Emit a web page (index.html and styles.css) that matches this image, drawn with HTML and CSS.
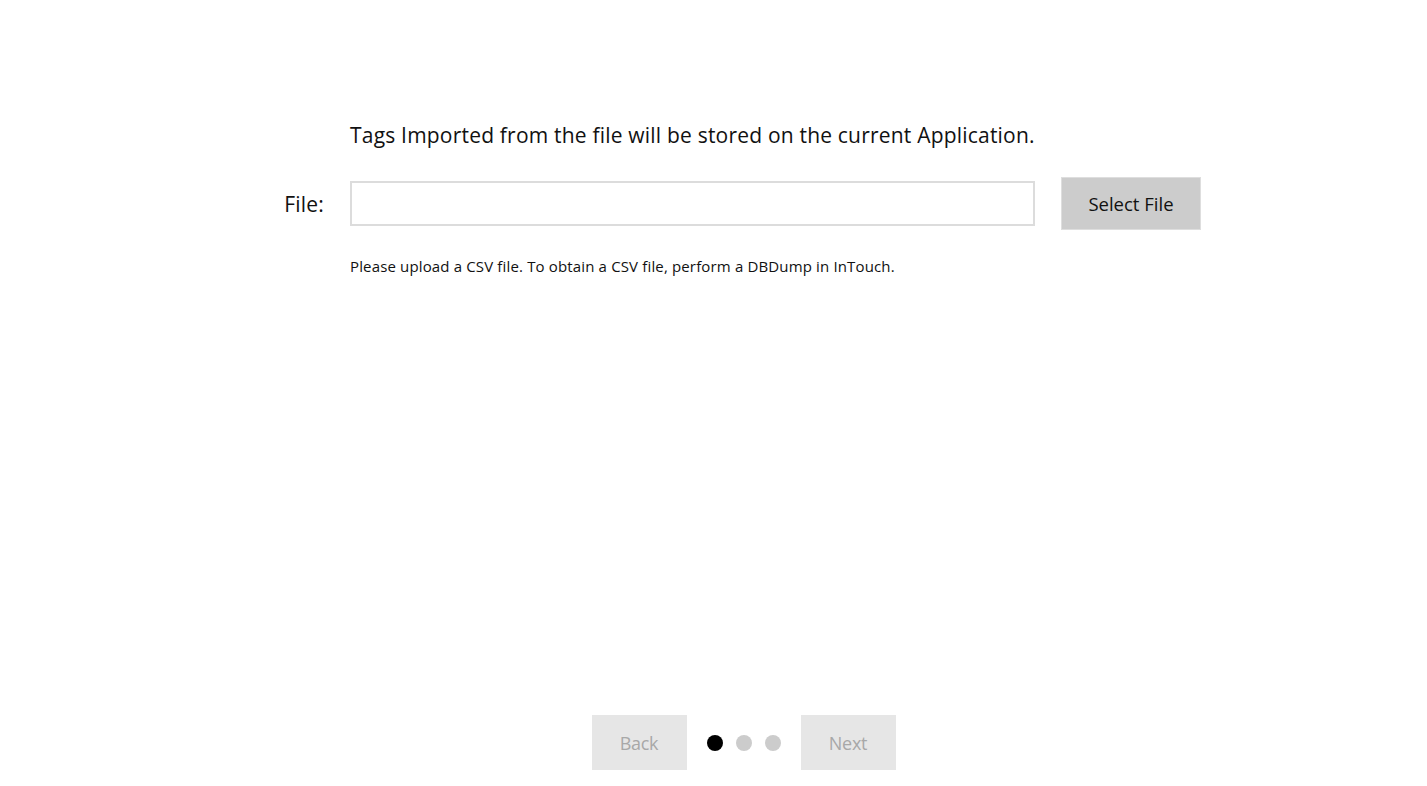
FILE: index.html
```html
<!DOCTYPE html>
<html>
<head>
<meta charset="utf-8">
<link rel="stylesheet" href="styles.css">
</head>
<body>
<div class="page">
  <main class="content">
    <div class="grid">
      <div></div>
      <p class="intro">Tags Imported from the file will be stored on the current Application.</p>
      <div></div>
      <label class="label">File:</label>
      <div class="input"></div>
      <button class="select">Select File</button>
      <div></div>
      <p class="note">Please upload a CSV file. To obtain a CSV file, perform a DBDump in InTouch.</p>
      <div></div>
    </div>
  </main>
  <footer class="nav">
    <button class="navbtn">Back</button>
    <div class="dots">
      <span class="dot active"></span>
      <span class="dot"></span>
      <span class="dot"></span>
    </div>
    <button class="navbtn">Next</button>
  </footer>
</div>
</body>
</html>
```
FILE: styles.css
```css
html, body {
  margin: 0;
  padding: 0;
  background: #ffffff;
}
body {
  font-family: "Open Sans", "Noto Sans", sans-serif;
  color: #111;
}
.page {
  width: 1427px;
  height: 786px;
  display: flex;
  flex-direction: column;
  position: relative;
  overflow: hidden;
}
.content {
  flex: 1;
  padding-top: 120px;
}
.grid {
  display: grid;
  grid-template-columns: 350px 686px 166px;
  align-items: center;
}
.intro {
  margin: 0;
  font-size: 21px;
  letter-spacing: 0.2px;
  line-height: 30px;
  height: 30px;
  margin-bottom: 27px;
  white-space: nowrap;
}
.label {
  justify-self: end;
  margin-right: 26px;
  font-size: 21px;
  letter-spacing: 0.2px;
}
.input {
  height: 41px;
  border: 2px solid #dcdcdc;
  box-sizing: content-box;
  margin-right: 1px;
}
.select {
  justify-self: end;
  width: 140px;
  height: 53px;
  margin-right: 1px;
  background: #cccccc;
  border: 1px solid #dedede;
  font-family: inherit;
  font-size: 18.5px;
  color: #111;
  padding: 0;
}
.note {
  margin: 0;
  margin-top: 26px;
  font-size: 15px;
  letter-spacing: 0.15px;
  white-space: nowrap;
}
.nav {
  display: flex;
  justify-content: center;
  align-items: center;
  padding-bottom: 16px;
  padding-left: 60px;
}
.navbtn {
  width: 95px;
  height: 55px;
  background: #e6e6e6;
  border: none;
  color: #a8a8a8;
  font-family: inherit;
  font-size: 18px;
  letter-spacing: -0.3px;
  padding: 0;
}
.dots {
  display: flex;
  gap: 13px;
  padding: 0 20px;
}
.dot {
  width: 16px;
  height: 16px;
  border-radius: 50%;
  background: #cccccc;
}
.dot.active {
  background: #000;
}
```
